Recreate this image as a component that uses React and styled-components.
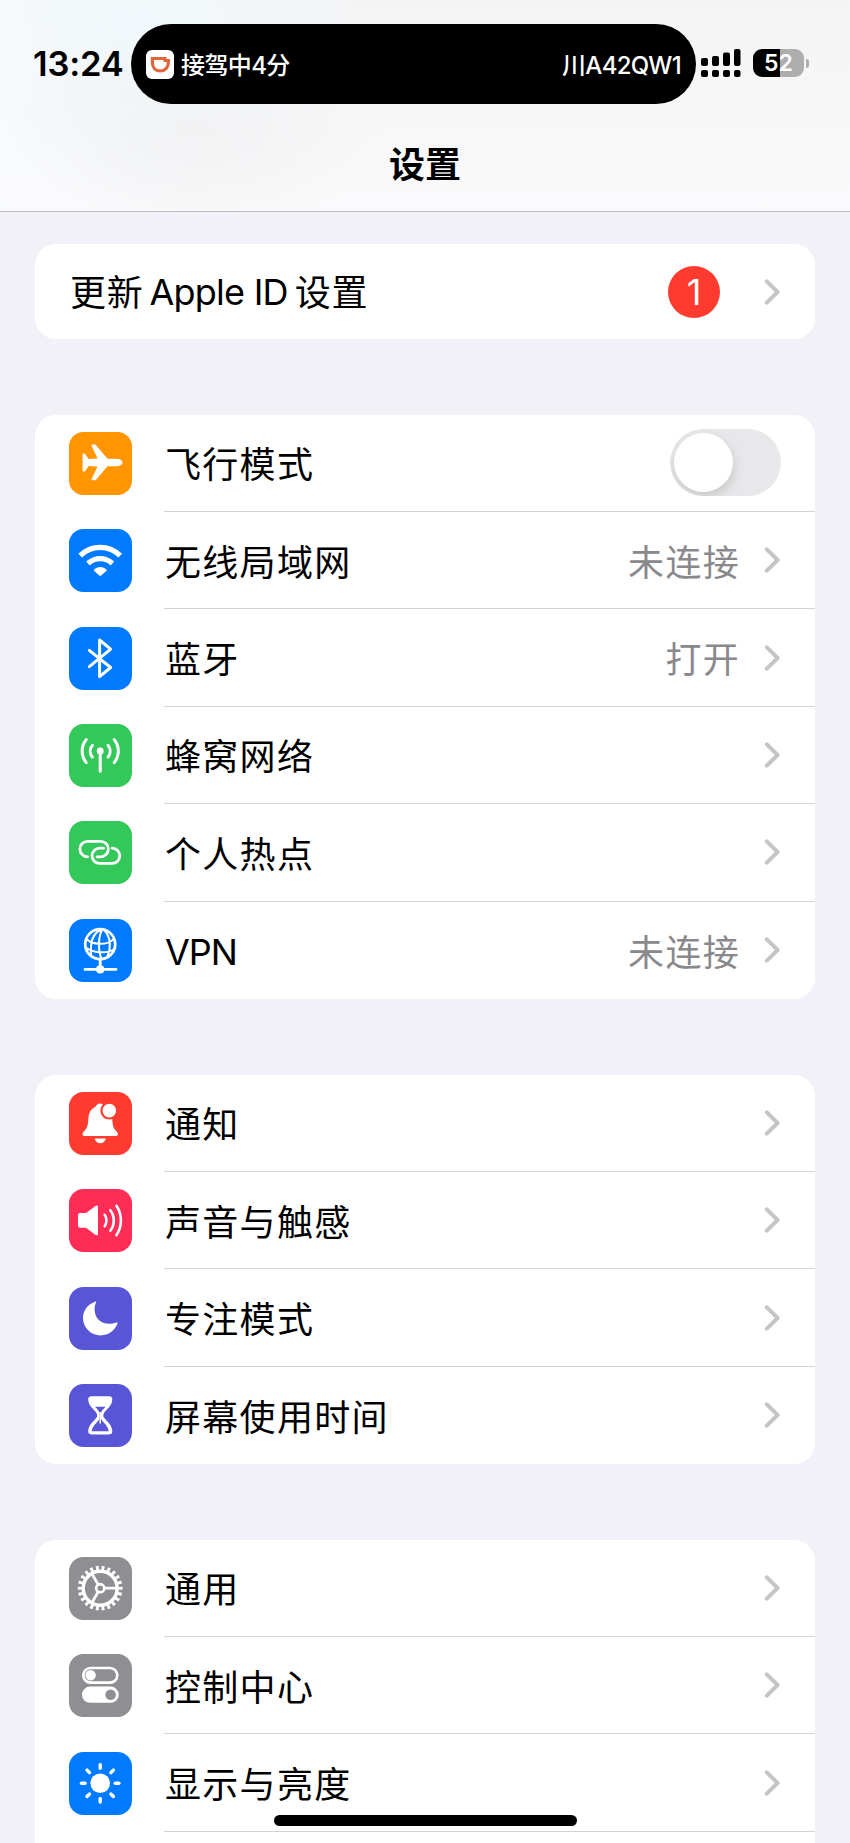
import React from 'react';
import styled, { createGlobalStyle } from 'styled-components';

const GlobalStyle = createGlobalStyle`
  * {
    box-sizing: border-box;
  }

  body {
    margin: 0;
    background: #f2f1f7;
    font-family: Inter, 'Noto Sans CJK SC', sans-serif;
    color: #000;
  }
`;

const Screen = styled.div`
  position: relative;
  width: 850px;
  height: 1843px;
  overflow: hidden;
  background: #f2f1f7;
`;

const Header = styled.header`
  height: 212px;
  border-bottom: 1px solid #bcbcbe;
  background: radial-gradient(
      ellipse 190px 110px at 190px 130px,
      rgba(240, 240, 241, 0.8),
      rgba(240, 240, 241, 0)
    ),
    radial-gradient(
      ellipse 240px 170px at 130px 30px,
      rgba(241, 248, 251, 1),
      rgba(241, 248, 251, 0)
    ),
    linear-gradient(to right, rgba(250, 251, 253, 0.9), rgba(250, 251, 253, 0) 30%),
    linear-gradient(to bottom, #f4f4f5, #fafafc);
`;

const StatusBar = styled.div`
  display: flex;
  align-items: center;
  height: 104px;
  padding: 24px 0 0 33px;
`;

const Clock = styled.div`
  width: 98px;
  padding-bottom: 2px;
  font-size: 34.5px;
  font-weight: 600;
  letter-spacing: -0.2px;
  white-space: nowrap;
`;

const Island = styled.div`
  display: flex;
  align-items: center;
  width: 565px;
  height: 80px;
  padding: 0 15px;
  border-radius: 40px;
  background: #000;
  color: #fff;
  font-size: 24px;
  font-weight: 500;
  white-space: nowrap;

  svg {
    margin-right: 7px;
  }
`;

const Trip = styled.span`
  padding-bottom: 2px;
  letter-spacing: -0.6px;
`;

const Plate = styled.span`
  margin-left: auto;
  padding-bottom: 2px;
  letter-spacing: -0.7px;
`;

const SignalIcon = styled.svg`
  margin: -2px 0 0 5px;
`;

const Battery = styled.div`
  display: flex;
  align-items: center;
  justify-content: center;
  width: 51px;
  height: 28px;
  margin: -2px 2px 0 12px;
  border-radius: 9px;
  background: linear-gradient(to right, #000 52%, #adadae 52%);
  color: #fff;
  font-size: 23px;
  font-weight: 600;
`;

const BatteryTip = styled.div`
  width: 3px;
  height: 9px;
  margin-top: -2px;
  border-radius: 0 4px 4px 0;
  background: #adadae;
`;

const Title = styled.h1`
  margin: 0;
  padding-top: 34px;
  font-size: 36px;
  line-height: 54px;
  font-weight: 600;
  text-align: center;
`;

const List = styled.main`
  display: flex;
  flex-direction: column;
  gap: 75.6px;
  padding: 32px 35px 0;
`;

const Card = styled.section`
  flex: none;
  border-radius: 21px;
  background: #fff;
  overflow: hidden;
`;

const Row = styled.div`
  display: flex;
  align-items: center;
  height: ${(props) => props.$height || '97.4px'};
  padding-left: 34px;
`;

const Tile = styled.div`
  flex: none;
  width: 63px;
  height: 63px;
  margin-right: 32px;
  border-radius: 14.5px;
  background: ${(props) => props.$color};

  svg {
    display: block;
  }
`;

const Content = styled.div`
  display: flex;
  flex: 1;
  align-items: center;
  height: 100%;
  padding-right: 34px;
  border-bottom: ${(props) => (props.$last ? 'none' : '1px solid #d3d3d6')};
`;

const Label = styled.span`
  flex: 1;
  padding: ${(props) => props.$top || '5px'} 0 0 1px;
  font-size: 36px;
  line-height: 54px;
  letter-spacing: ${(props) => props.$spacing || '1.3px'};
  white-space: nowrap;
`;

const Latin = styled.span`
  margin: ${(props) => props.$margin || '0'};
  letter-spacing: ${(props) => props.$spacing || '-1px'};
  vertical-align: 1px;
`;

const Value = styled(Label)`
  flex: none;
  margin-right: 24px;
  color: #89898d;
`;

const Badge = styled.span`
  display: flex;
  align-items: center;
  justify-content: center;
  width: 52px;
  height: 52px;
  margin-right: 44px;
  border-radius: 50%;
  background: #ff3b30;
  color: #fff;
  font-size: 36px;
`;

const Switch = styled.div`
  width: 111px;
  height: 67px;
  padding: 4px;
  border-radius: 34px;
  background: #e8e8ea;
  overflow: hidden;
`;

const Knob = styled.div`
  width: 59px;
  height: 59px;
  border-radius: 50%;
  background: #fff;
  box-shadow: 1px 5px 12px rgba(0, 0, 0, 0.14);
`;

const HomeIndicator = styled.div`
  position: absolute;
  left: 274px;
  bottom: 17px;
  width: 303px;
  height: 11px;
  border-radius: 6px;
  background: #000;
`;

const Glyph = ({ children }) => (
  <svg
    width='63'
    height='63'
    viewBox='0 0 63 63'
    fill='none'
    stroke='#fff'
    strokeLinecap='round'
    strokeLinejoin='round'
  >
    {children}
  </svg>
);

const Chevron = () => (
  <svg width='17' height='28' viewBox='0 0 17 28' fill='none'>
    <path
      d='M2.8 3.3L13.6 14L2.8 24.7'
      stroke='#c5c5c7'
      strokeWidth='4'
      strokeLinecap='round'
      strokeLinejoin='round'
    />
  </svg>
);

const icons = {
  airplane: (
    <path
      d='M53.5 30.5C53.5 33 50.5 34.3 47 34.3H38.5L27.3 47.4C26.8 48 26.2 48.2 25.4 48.2H23.4C22.6 48.2 22.3 47.6 22.6 46.9L28.6 34.4L19.6 34L16.4 38.8C16 39.4 15.5 39.6 14.8 39.6C14 39.6 13.6 39.2 13.6 38.4V22.6C13.6 21.8 14 21.4 14.8 21.4C15.5 21.4 16 21.6 16.4 22.2L19.6 27L28.6 26.6L22.6 14.1C22.3 13.4 22.6 12.4 23.4 12.4H25.4C26.2 12.4 26.8 12.8 27.3 13.4L38.5 26.7H47C50.5 26.7 53.5 28 53.5 30.5Z'
      fill='#fff'
      stroke='none'
    />
  ),
  wifi: (
    <>
      <path
        d='M11.2 26.7A28.2 28.2 0 0 1 51.2 26.7M19 34.5A17.8 17.8 0 0 1 43.4 34.5'
        strokeWidth='5.3'
        strokeLinecap='butt'
      />
      <path
        d='M25 40.7C28.3 37.2 34.2 37.2 37.5 40.7C37.9 41.1 37.8 41.4 37.5 41.8L32.2 46.6C31.5 47.1 31 47.1 30.3 46.6L25 41.8C24.7 41.4 24.6 41.1 25 40.7Z'
        fill='#fff'
        stroke='none'
      />
    </>
  ),
  bluetooth: (
    <path
      d='M20.3 23.3L41.7 40.5L30.6 49.6V13L41.7 22.1L20.3 39.6'
      strokeWidth='3'
    />
  ),
  cellular: (
    <>
      <circle cx='31.2' cy='27' r='3.5' fill='#fff' stroke='none' />
      <path d='M31.2 28V47.3' strokeWidth='3.1' />
      <path
        d='M23.3 21.3A9.5 9.5 0 0 0 23.3 33M39.1 21.3A9.5 9.5 0 0 1 39.1 33M17.2 15.6A18.2 18.2 0 0 0 17.2 38.6M45.2 15.6A18.2 18.2 0 0 1 45.2 38.6'
        strokeWidth='3'
      />
    </>
  ),
  hotspot: (
    <path
      d='M18.6 35.8A7.75 7.75 0 0 1 18.6 20.3H31.6A7.75 7.75 0 0 1 31.6 35.8H28M43.2 27.2A7.6 7.6 0 0 1 43.2 42.4H30.6A7.6 7.6 0 0 1 30.6 27.2H34.6'
      strokeWidth='2.8'
    />
  ),
  vpn: (
    <>
      <circle cx='31.2' cy='25.2' r='15' strokeWidth='2.7' />
      <path
        d='M32 10.5C24.5 14 20.8 22 22.2 35.7M33.4 10.5C29.2 17 28.8 31 32.5 40M35.2 11C42 18 42.2 29 38.2 38M17.8 20.2C23 25.8 38 26.6 44 20.6M17.6 29C23.5 33.8 38 35 44.5 30.5'
        strokeWidth='2'
      />
      <path d='M31.2 41V47' strokeWidth='2.8' strokeLinecap='butt' />
      <path d='M16 50.4H47' strokeWidth='2.8' />
      <circle cx='31.2' cy='50.4' r='4.1' fill='#fff' stroke='none' />
    </>
  ),
  bell: (
    <>
      <path
        d='M15.4 43.9C13.2 43.9 12.9 41.7 14.6 39.8C18 36.2 18.9 34.5 19.3 27.5C19.7 20.5 22 16.8 26.3 15C27.3 12.7 29 11.5 31.2 11.5C33.4 11.5 35 12.7 36 15C40.5 16.8 43 20.5 43.3 27.5C43.7 34.5 44.4 36.2 47.9 39.8C49.7 41.7 49.3 43.9 47.1 43.9Z'
        fill='#fff'
        stroke='none'
      />
      <path
        d='M25.6 46.5H36.9C36 49.6 34 51.2 31.2 51.2C28.5 51.2 26.4 49.6 25.6 46.5Z'
        fill='#fff'
        stroke='none'
      />
      <circle cx='40.3' cy='18.6' r='7.9' fill='#fff' stroke='#ff3b30' strokeWidth='2.2' />
    </>
  ),
  speaker: (
    <>
      <path
        d='M11.4 24H17L26.2 17.2C27.8 16 29 16.5 29 18.3V44.5C29 46.4 27.8 46.9 26.2 45.7L17 38.8H11.4C9.8 38.8 9 38 9 36.3V26.5C9 24.8 9.8 24 11.4 24Z'
        fill='#fff'
        stroke='none'
      />
      <path
        d='M35.7 25.8C38 29 38 34 35.7 37.2M41.3 21.2C45.9 27 45.9 36 41.3 41.8M47.4 16.8C53.4 25.5 53.4 37.5 47.4 46.2'
        strokeWidth='2.6'
      />
    </>
  ),
  moon: (
    <path
      d='M26 14.7C26.7 14.4 27.3 14.8 27 15.6C25.9 18 25.6 20 25.6 22.2C25.6 30.8 31.6 36.8 40 36.8C42.6 36.8 45 36.5 47.4 35.6C48.3 35.3 48.8 35.8 48.5 36.6C45.9 43.6 39.5 48.4 31.7 48.4C21.8 48.4 14 40.8 14 31C14 23.5 18.8 17.3 26 14.7Z'
      fill='#fff'
      stroke='none'
    />
  ),
  hourglass: (
    <>
      <path
        d='M22.5 12.3H40C42.5 12.3 43.5 13.6 43.3 15.8C43 22.8 36 26.5 34.8 29.4C34.2 30.8 34.2 32 34.8 33.2C36 36 43 40 43.3 46.8C43.5 49 42.5 50.4 40 50.4H22.5C20 50.4 19 49 19.2 46.8C19.5 40 26.5 36 27.7 33.2C28.3 32 28.3 30.8 27.7 29.4C26.5 26.5 19.5 22.8 19.2 15.8C19 13.6 20 12.3 22.5 12.3Z'
        fill='#fff'
        stroke='none'
      />
      <path
        d='M26 22.8H36.6C34.7 24.8 32.5 26.7 32 29V34.5C33.5 38.5 39 41.2 39.8 47.2H22.7C23.5 41.2 29 38.5 30.5 34.5V29C30 26.7 27.9 24.8 26 22.8Z'
        fill='#5856d6'
        stroke='none'
      />
      <path d='M31.25 28V39.5' strokeWidth='1.5' strokeLinecap='butt' />
    </>
  ),
  gear: (
    <>
      <circle cx='31.2' cy='31.2' r='17' strokeWidth='3.4' />
      <circle
        cx='31.2'
        cy='31.2'
        r='20.2'
        strokeWidth='4.4'
        strokeLinecap='butt'
        pathLength='220'
        strokeDasharray='5 5'
        strokeDashoffset='2.5'
      />
      <circle cx='31.2' cy='31.2' r='4.1' strokeWidth='2.6' />
      <path d='M35.3 31.2H47.5M29.2 27.6L22.8 16.5M29.2 34.8L22.8 45.9' strokeWidth='2.8' />
    </>
  ),
  controls: (
    <>
      <rect x='14.3' y='14' width='34' height='14.6' rx='7.3' strokeWidth='2.7' />
      <circle cx='21.6' cy='21.3' r='5.2' fill='#fff' stroke='none' />
      <rect x='13' y='32.6' width='36.7' height='16.2' rx='8.1' fill='#fff' stroke='none' />
      <circle cx='41.6' cy='40.7' r='5.3' fill='#8e8e93' stroke='none' />
    </>
  ),
  sun: (
    <>
      <circle cx='31.2' cy='31.3' r='9.8' fill='#fff' stroke='none' />
      {[0, 45, 90, 135, 180, 225, 270, 315].map((angle) => (
        <path
          key={angle}
          d='M31.2 12.6V16.2'
          strokeWidth='3.4'
          transform={`rotate(${angle} 31.2 31.3)`}
        />
      ))}
    </>
  ),
};

const groups = [
  [
    { icon: 'airplane', color: '#ff9500', label: '飞行模式', toggle: true },
    { icon: 'wifi', color: '#007aff', label: '无线局域网', value: '未连接' },
    { icon: 'bluetooth', color: '#007aff', label: '蓝牙', value: '打开' },
    { icon: 'cellular', color: '#34c759', label: '蜂窝网络' },
    { icon: 'hotspot', color: '#34c759', label: '个人热点' },
    { icon: 'vpn', color: '#007aff', label: <Latin>VPN</Latin>, value: '未连接' },
  ],
  [
    { icon: 'bell', color: '#ff3b30', label: '通知' },
    { icon: 'speaker', color: '#ff2d55', label: '声音与触感' },
    { icon: 'moon', color: '#5856d6', label: '专注模式' },
    { icon: 'hourglass', color: '#5856d6', label: '屏幕使用时间' },
  ],
  [
    { icon: 'gear', color: '#8e8e93', label: '通用' },
    { icon: 'controls', color: '#8e8e93', label: '控制中心' },
    { icon: 'sun', color: '#007aff', label: '显示与亮度', more: true },
  ],
];

const SettingRow = ({ item, last }) => (
  <Row>
    <Tile $color={item.color}>
      <Glyph>{icons[item.icon]}</Glyph>
    </Tile>
    <Content $last={last}>
      <Label>{item.label}</Label>
      {item.value && <Value>{item.value}</Value>}
      {item.toggle ? (
        <Switch>
          <Knob />
        </Switch>
      ) : (
        <Chevron />
      )}
    </Content>
  </Row>
);

const App = () => (
  <Screen>
    <GlobalStyle />
    <Header>
      <StatusBar>
        <Clock>13:24</Clock>
        <Island>
          <svg width='28' height='29' viewBox='0 0 28 29' fill='none'>
            <rect width='28' height='29' rx='6' fill='#fff' />
            <path
              d='M20.5 8.5H6.4V12.5C6.4 17.5 9.6 21 14.3 21C19 21 22.4 17.5 22.4 12.5V10.5H17.5'
              stroke='#e0663a'
              strokeWidth='3.2'
            />
          </svg>
          <Trip>接驾中4分</Trip>
          <Plate>川A42QW1</Plate>
        </Island>
        <SignalIcon width='40' height='28' viewBox='0 0 40 28'>
          <rect x='0' y='9' width='7' height='8' rx='2' />
          <rect x='11' y='7' width='7' height='10' rx='2' />
          <rect x='22' y='3.5' width='7' height='13.5' rx='2' />
          <rect x='33' y='0' width='6.5' height='17' rx='2' />
          <rect x='0' y='21' width='7' height='7' rx='2' />
          <rect x='11' y='21' width='7' height='7' rx='2' />
          <rect x='22' y='21' width='7' height='7' rx='2' />
          <rect x='33' y='21' width='6.5' height='7' rx='2' />
        </SignalIcon>
        <Battery>52</Battery>
        <BatteryTip />
      </StatusBar>
      <Title>设置</Title>
    </Header>
    <List>
      <Card>
        <Row $height='95px'>
          <Content $last>
            <Label $top='2px' $spacing='0.7px'>
              更新
              <Latin $margin='0 7px 0 6px' $spacing='-0.75px'>
                Apple ID
              </Latin>
              设置
            </Label>
            <Badge>1</Badge>
            <Chevron />
          </Content>
        </Row>
      </Card>
      {groups.map((items, index) => (
        <Card key={index}>
          {items.map((item, i) => (
            <SettingRow
              key={item.icon}
              item={item}
              last={i === items.length - 1 && !item.more}
            />
          ))}
          {items[items.length - 1].more && <Row />}
        </Card>
      ))}
    </List>
    <HomeIndicator />
  </Screen>
);

export default App;
